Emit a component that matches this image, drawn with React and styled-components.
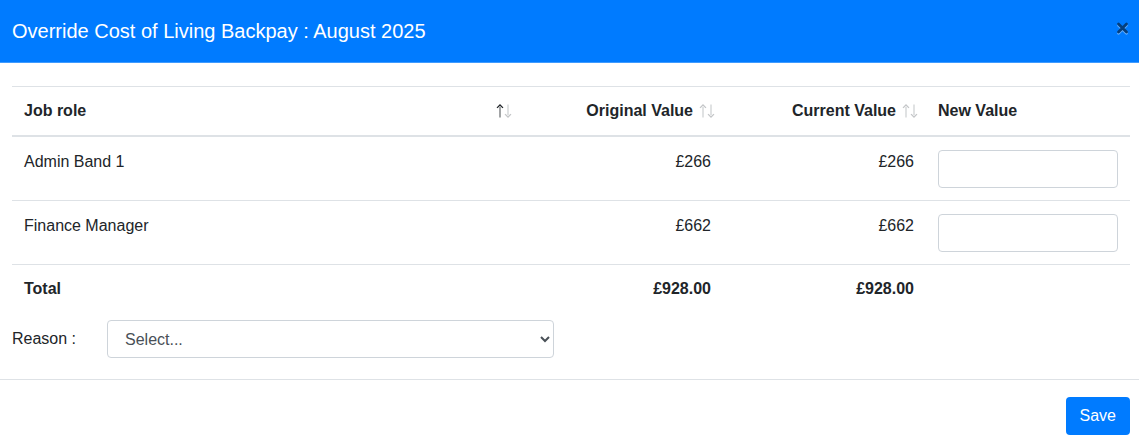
import React from "react";
import styled, { createGlobalStyle } from "styled-components";

const GlobalStyle = createGlobalStyle`
  *, *::before, *::after { box-sizing: border-box; }
  body {
    margin: 0;
    background: #fff;
    color: #212529;
    font: 400 16px/24px "Liberation Sans", Arial, sans-serif;
  }
`;

const Dialog = styled.form`
  width: 100%;
`;

const Header = styled.header`
  display: flex;
  justify-content: space-between;
  align-items: flex-start;
  padding: 16px 10px 16px 12px;
  background: #007bff;
  border-bottom: 1px solid #3f9bff;
  color: #fff;
`;

const Title = styled.h1`
  margin: 0;
  font-size: 20px;
  line-height: 30px;
  font-weight: 400;
`;

const CloseButton = styled.button`
  display: flex;
  margin: 0;
  padding: 6px 0;
  border: 0;
  background: none;
  cursor: pointer;
`;

const Body = styled.main`
  padding: 23px 9px 21px 12px;
`;

const Table = styled.table`
  width: 100%;
  table-layout: fixed;
  border-collapse: separate;
  border-spacing: 0;
`;

const Col = styled.col`
  width: ${({ $width }) => $width};
`;

const HeadCell = styled.th`
  padding: 12px;
  border-top: 1px solid #dee2e6;
  border-bottom: 2px solid #dee2e6;
  text-align: left;
  font-weight: 700;
`;

const HeadContent = styled.div`
  display: flex;
  align-items: center;
  justify-content: ${({ $spread }) => ($spread ? "space-between" : "flex-end")};
  gap: 6px;
  margin-right: -4px;
`;

const SortButton = styled.button`
  display: flex;
  padding: 0;
  border: 0;
  background: none;
  cursor: pointer;
`;

const Cell = styled.td`
  padding: 13px 12px 12px;
  border-top: 1px solid #dee2e6;
  vertical-align: top;
  text-align: ${({ $numeric }) => ($numeric ? "right" : "left")};
  tbody tr:first-child & { border-top: 0; }
`;

const TotalCell = styled(Cell)`
  padding: 12px;
  font-weight: 700;
`;

const ValueInput = styled.input`
  display: block;
  width: 100%;
  height: 38px;
  padding: 6px 12px;
  border: 1px solid #ced4da;
  border-radius: 4px;
  background: #fff;
  color: #495057;
  font: inherit;
`;

const ReasonRow = styled.div`
  display: flex;
  align-items: center;
  margin-top: 7px;
`;

const ReasonLabel = styled.label`
  flex: 0 0 95px;
`;

const ReasonSelect = styled.select`
  width: 40%;
  height: 38px;
  padding: 6px 0 6px 13px;
  border: 1px solid #ced4da;
  border-radius: 4px;
  background: #fff;
  color: #495057;
  font: inherit;
`;

const Footer = styled.footer`
  display: flex;
  justify-content: flex-end;
  padding: 17px 9px 8px;
  border-top: 1px solid #dee2e6;
`;

const SaveButton = styled.button`
  height: 38px;
  padding: 6px 13px;
  border: 0;
  border-radius: 4px;
  background: #007bff;
  color: #fff;
  font: inherit;
  padding: 6px 14px;
  cursor: pointer;
`;

function SortIcon({ label, active }) {
  return (
    <SortButton type="button" aria-label={label}>
      <svg width="16" height="14" viewBox="0 0 16 14" fill="none">
        <path d="M4 3v10.5" stroke={active ? "#8b8e90" : "#d9dbdc"} strokeWidth="1.6" />
        <path
          d="M1 3.9 4 1 7 3.9"
          stroke={active ? "#212529" : "#c4c6c8"}
          strokeWidth="1.3"
        />
        <path d="M12 0.5V11" stroke="#d9dbdc" strokeWidth="1.6" />
        <path d="M9 10.1 12 13l3-2.9" stroke="#c4c6c8" strokeWidth="1.3" />
      </svg>
    </SortButton>
  );
}

const rows = [
  { role: "Admin Band 1", original: "£266", current: "£266" },
  { role: "Finance Manager", original: "£662", current: "£662" },
];

export default function App() {
  return (
    <>
      <GlobalStyle />
      <Dialog onSubmit={(event) => event.preventDefault()}>
        <Header>
          <Title>Override Cost of Living Backpay : August 2025</Title>
          <CloseButton type="button" aria-label="Close">
            <svg width="13" height="14" viewBox="0 0 13 14" fill="none" strokeWidth="2.8" strokeLinecap="round">
              <path d="M2.5 3.2 10.5 11.2M10.5 3.2 2.5 11.2" stroke="#66b0ff" />
              <path d="M2.5 2 10.5 10M10.5 2 2.5 10" stroke="#053e7c" />
            </svg>
          </CloseButton>
        </Header>
        <Body>
          <Table>
            <colgroup>
              <Col />
              <Col $width="203px" />
              <Col $width="203px" />
              <Col $width="204px" />
            </colgroup>
            <thead>
              <tr>
                <HeadCell scope="col" aria-sort="ascending">
                  <HeadContent $spread>
                    Job role <SortIcon label="Sort by job role" active />
                  </HeadContent>
                </HeadCell>
                <HeadCell scope="col">
                  <HeadContent>
                    Original Value <SortIcon label="Sort by original value" />
                  </HeadContent>
                </HeadCell>
                <HeadCell scope="col">
                  <HeadContent>
                    Current Value <SortIcon label="Sort by current value" />
                  </HeadContent>
                </HeadCell>
                <HeadCell scope="col">New Value</HeadCell>
              </tr>
            </thead>
            <tbody>
              {rows.map((row) => (
                <tr key={row.role}>
                  <Cell>{row.role}</Cell>
                  <Cell $numeric>{row.original}</Cell>
                  <Cell $numeric>{row.current}</Cell>
                  <Cell>
                    <ValueInput type="text" aria-label={`New value for ${row.role}`} />
                  </Cell>
                </tr>
              ))}
            </tbody>
            <tfoot>
              <tr>
                <TotalCell as="th" scope="row">Total</TotalCell>
                <TotalCell $numeric>£928.00</TotalCell>
                <TotalCell $numeric>£928.00</TotalCell>
                <TotalCell />
              </tr>
            </tfoot>
          </Table>
          <ReasonRow>
            <ReasonLabel htmlFor="reason">Reason :</ReasonLabel>
            <ReasonSelect id="reason" defaultValue="">
              <option value="">Select...</option>
            </ReasonSelect>
          </ReasonRow>
        </Body>
        <Footer>
          <SaveButton type="submit">Save</SaveButton>
        </Footer>
      </Dialog>
    </>
  );
}
